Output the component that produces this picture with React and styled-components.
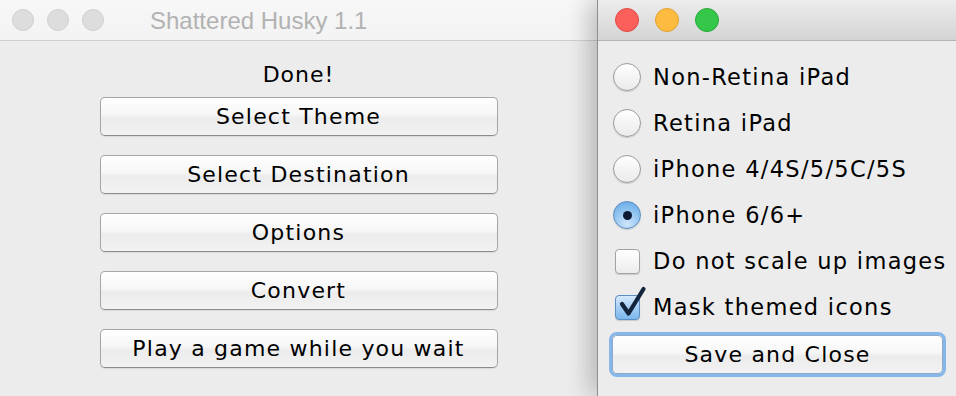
import React from "react";
import styled, { createGlobalStyle } from "styled-components";

const GlobalStyle = createGlobalStyle`
  html, body {
    margin: 0;
    padding: 0;
    background: #ececec;
  }
  #root {
    width: 956px;
    height: 396px;
    overflow: hidden;
  }
`;

const Desktop = styled("div")`
  display: flex;
  width: 956px;
  height: 396px;
  font-family: "DejaVu Sans", "Liberation Sans", sans-serif;
  color: #000;
`;

const MainWindow = styled("div")`
  width: 597px;
  flex: none;
  display: flex;
  flex-direction: column;
  background: #ececec;
`;

const SideWindow = styled("div")`
  flex: 1;
  display: flex;
  flex-direction: column;
  background: #ececec;
  border-left: 1px solid #8e8e8e;
  box-shadow: -8px 0 22px rgba(0, 0, 0, 0.22);
  position: relative;
  z-index: 1;
`;

const TitleBar = styled("div")`
  height: 40px;
  flex: none;
  display: flex;
  align-items: center;
  padding-left: ${p => p.$pad}px;
  gap: ${p => p.$gap}px;
  border-bottom: 1px solid ${p => (p.$active ? "#b3b3b3" : "#d0d0d0")};
  background: ${p =>
    p.$active ? "linear-gradient(#ececec, #d4d4d4)" : "linear-gradient(#f7f7f7, #f3f3f3)"};
`;

const Light = styled("span")`
  width: ${p => p.$size}px;
  height: ${p => p.$size}px;
  border-radius: 50%;
  box-sizing: border-box;
  background: ${p => p.$fill};
  border: 1px solid ${p => p.$edge};
`;

const Title = styled("span")`
  margin-left: 33px;
  font-family: "Liberation Sans", Arial, sans-serif;
  font-size: 24px;
  color: #b2b2b2;
  padding-top: 1px;
`;

const MainContent = styled("div")`
  display: flex;
  flex-direction: column;
  align-items: center;
  padding-top: 21px;
`;

const Status = styled("div")`
  font-size: 22px;
  line-height: 26px;
  letter-spacing: 1px;
`;

const ButtonList = styled("div")`
  display: flex;
  flex-direction: column;
  gap: 19px;
  margin-top: 9px;
`;

const Button = styled("button")`
  width: ${p => p.$width}px;
  height: 39px;
  box-sizing: border-box;
  margin: 0;
  padding: 0;
  font-family: "DejaVu Sans", "Liberation Sans", sans-serif;
  font-size: 22px;
  line-height: 26px;
  letter-spacing: 1.2px;
  white-space: nowrap;
  color: #000;
  border-radius: 5px;
  border: 1px solid #a6a6a6;
  border-bottom-color: #8c8c8c;
  background: linear-gradient(#ffffff, #f6f6f6 45%, #ececec 55%, #f2f2f2);
  box-shadow: 0 1px 1px rgba(0, 0, 0, 0.08);
`;

const FocusButton = styled(Button)`
  border: 1px solid #8fa9c9;
  box-shadow: 0 0 0 3px #86b6ea;
`;

const SideContent = styled("div")`
  display: flex;
  flex-direction: column;
  padding: 13px 0 0 14px;
`;

const OptionRow = styled("label")`
  height: 46px;
  display: flex;
  align-items: center;
  gap: 11px;
  font-size: 22.5px;
  letter-spacing: 1.3px;
  white-space: nowrap;
`;

const Slot = styled("span")`
  width: 30px;
  height: 30px;
  display: flex;
  align-items: center;
  justify-content: center;
  flex: none;
`;

const Radio = styled("span")`
  width: 28px;
  height: 28px;
  box-sizing: border-box;
  border-radius: 50%;
  display: flex;
  align-items: center;
  justify-content: center;
  border: 1px solid ${p => (p.$on ? "#5d8dc2" : "#9c9c9c")};
  background: ${p =>
    p.$on
      ? "radial-gradient(circle at 50% 85%, #cfe6fb, #8fc3ef 55%, #5fa4e4)"
      : "linear-gradient(#ffffff, #f4f4f4 50%, #ebebeb)"};
  box-shadow: 0 1px 1px rgba(0, 0, 0, 0.15);
`;

const Dot = styled("span")`
  width: 9px;
  height: 9px;
  border-radius: 50%;
  background: #0d1b33;
`;

const Check = styled("span")`
  width: 25px;
  height: 25px;
  box-sizing: border-box;
  border-radius: 4px;
  position: relative;
  border: 1px solid ${p => (p.$on ? "#5d8dc2" : "#a3a3a3")};
  background: ${p =>
    p.$on
      ? "linear-gradient(#d6eafc, #a4cef3 50%, #7ab8ee)"
      : "linear-gradient(#ffffff, #f6f6f6 50%, #ececec)"};
  box-shadow: 0 1px 1px rgba(0, 0, 0, 0.15);

  svg {
    position: absolute;
    left: -1px;
    top: -9px;
    overflow: visible;
  }
`;

const SaveRow = styled("div")`
  margin-top: 5px;
  padding: 0 14px 0 0;
  display: flex;
  justify-content: flex-end;
`;

const radios = [
  { label: "Non-Retina iPad", on: false },
  { label: "Retina iPad", on: false },
  { label: "iPhone 4/4S/5/5C/5S", on: false },
  { label: "iPhone 6/6+", on: true },
];

const checks = [
  { label: "Do not scale up images", on: false },
  { label: "Mask themed icons", on: true },
];

const actions = ["Select Theme", "Select Destination", "Options", "Convert", "Play a game while you wait"];

export default function App() {
  return (
    <>
      <GlobalStyle />
      <Desktop>
        <MainWindow>
          <TitleBar $pad={12} $gap={13}>
            <Light $size={22} $fill="#dddddd" $edge="#d0d0d0" />
            <Light $size={22} $fill="#dddddd" $edge="#d0d0d0" />
            <Light $size={22} $fill="#dddddd" $edge="#d0d0d0" />
            <Title>Shattered Husky 1.1</Title>
          </TitleBar>
          <MainContent>
            <Status>Done!</Status>
            <ButtonList>
              {actions.map(a => (
                <Button key={a} $width={398}>{a}</Button>
              ))}
            </ButtonList>
          </MainContent>
        </MainWindow>
        <SideWindow>
          <TitleBar $active $pad={17} $gap={16}>
            <Light $size={24} $fill="#fc605b" $edge="#de4a45" />
            <Light $size={24} $fill="#fdbc3f" $edge="#dea133" />
            <Light $size={24} $fill="#34c749" $edge="#28a83a" />
          </TitleBar>
          <SideContent>
            {radios.map(r => (
              <OptionRow key={r.label}>
                <Slot>
                  <Radio $on={r.on}>{r.on && <Dot />}</Radio>
                </Slot>
                {r.label}
              </OptionRow>
            ))}
            {checks.map(c => (
              <OptionRow key={c.label}>
                <Slot>
                  <Check $on={c.on}>
                    {c.on && (
                      <svg width="30" height="32" viewBox="0 0 30 32">
                        <path
                          d="M7 17 L13.5 26.5 L28.5 2"
                          fill="none"
                          stroke="#14243c"
                          strokeWidth="4.2"
                          strokeLinecap="round"
                          strokeLinejoin="round"
                        />
                      </svg>
                    )}
                  </Check>
                </Slot>
                {c.label}
              </OptionRow>
            ))}
            <SaveRow>
              <FocusButton $width={331}>Save and Close</FocusButton>
            </SaveRow>
          </SideContent>
        </SideWindow>
      </Desktop>
    </>
  );
}
